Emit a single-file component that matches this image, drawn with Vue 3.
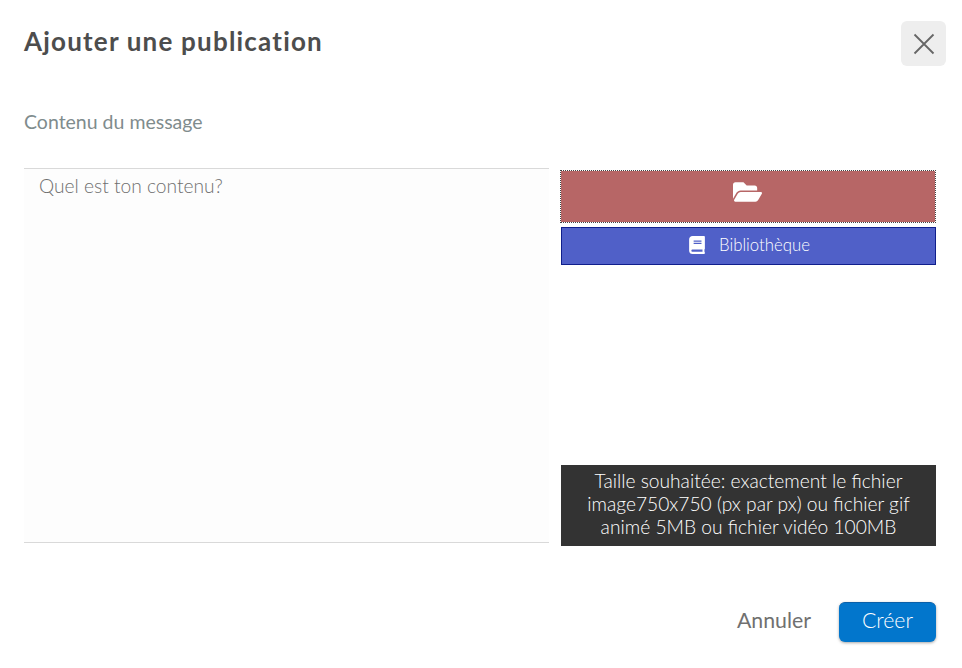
<template>
  <div class="modal">
    <header class="head">
      <h1 class="title">Ajouter une publication</h1>
      <button class="close" type="button" aria-label="Fermer">
        <svg width="22" height="22" viewBox="0 0 22 22">
          <path d="M1.5 1.5 L20.5 20.5 M20.5 1.5 L1.5 20.5" stroke="#666" stroke-width="1.8" fill="none" />
        </svg>
      </button>
    </header>

    <p class="label">Contenu du message</p>

    <div class="body">
      <textarea class="content" placeholder="Quel est ton contenu?"></textarea>
      <div class="side">
        <div class="upload">
          <svg width="29" height="26" viewBox="0 0 576 512">
            <path fill="#fff" d="M572.694 292.093L500.27 416.248A63.997 63.997 0 0 1 444.989 448H45.025c-18.523 0-30.064-20.093-20.731-36.093l72.424-124.155A64 64 0 0 1 152 256h399.964c18.523 0 30.064 20.093 20.73 36.093zM152 224h328v-48c0-26.51-21.49-48-48-48H272l-64-64H48C21.49 64 0 85.49 0 112v278.046l69.077-118.418C86.214 242.25 117.989 224 152 224z" />
          </svg>
        </div>
        <button class="library" type="button">
          <svg width="16" height="18" viewBox="0 0 448 512">
            <path fill="#fff" d="M448 360V24c0-13.3-10.7-24-24-24H96C43 0 0 43 0 96v320c0 53 43 96 96 96h328c13.3 0 24-10.7 24-24v-16c0-7.5-3.5-14.3-8.9-18.7-4.2-15.4-4.2-59.3 0-74.7 5.4-4.3 8.9-11.1 8.9-18.6zM128 134c0-3.3 2.7-6 6-6h212c3.3 0 6 2.7 6 6v20c0 3.3-2.7 6-6 6H134c-3.3 0-6-2.7-6-6v-20zm0 64c0-3.3 2.7-6 6-6h212c3.3 0 6 2.7 6 6v20c0 3.3-2.7 6-6 6H134c-3.3 0-6-2.7-6-6v-20zm253.4 250H96c-17.7 0-32-14.3-32-32 0-17.6 14.4-32 32-32h285.4c-1.9 17.1-1.9 46.9 0 64z" />
          </svg>
          <span>Bibliothèque</span>
        </button>
        <div class="hint">
          Taille souhaitée: exactement le fichier image750x750 (px par px) ou fichier gif animé 5MB ou fichier vidéo 100MB
        </div>
      </div>
    </div>

    <footer class="foot">
      <button class="cancel" type="button">Annuler</button>
      <button class="create" type="button">Créer</button>
    </footer>
  </div>
</template>

<script setup>
</script>

<style>
html, body {
  background: #fff;
}
</style>

<style scoped>
.modal {
  width: 962px;
  height: 668px;
  box-sizing: border-box;
  padding: 21px 16px 0 24px;
  font-family: Lato, "Liberation Sans", sans-serif;
  overflow: hidden;
}

.head {
  display: flex;
  justify-content: space-between;
  align-items: flex-start;
  height: 45px;
}

.title {
  margin: 0;
  font-size: 26px;
  line-height: 40px;
  font-weight: 700;
  letter-spacing: 1.2px;
  color: #4d4d4d;
}

.close {
  width: 45px;
  height: 45px;
  display: flex;
  align-items: center;
  justify-content: center;
  padding: 0;
  border: 0;
  border-radius: 6px;
  background: #eee;
}

.label {
  margin: 44px 0 0;
  font-size: 19.5px;
  line-height: 24px;
  color: #7f8c8d;
}

.body {
  display: flex;
  gap: 12px;
  margin-top: 34px;
  padding-right: 10px;
}

.content {
  display: block;
  width: 525px;
  height: 375px;
  box-sizing: border-box;
  padding: 5px 15px;
  border: 0;
  border-top: 1px solid #d9d9d9;
  border-bottom: 1px solid #d9d9d9;
  border-radius: 0;
  outline: 0;
  resize: none;
  background: #fdfdfd;
  font-family: inherit;
  font-size: 19.2px;
  line-height: 24px;
  font-weight: 300;
}

.content::placeholder {
  color: #6f6f6f;
  opacity: 1;
}

.side {
  flex: 1;
  display: flex;
  flex-direction: column;
  padding-top: 2px;
  height: 378px;
  box-sizing: border-box;
}

.upload {
  height: 53px;
  margin-left: -1px;
  box-sizing: border-box;
  display: flex;
  align-items: center;
  justify-content: center;
  padding: 0 2px 9px 0;
  border: 1px dotted #444;
  background: #b76666;
  background-clip: padding-box;
}

.library {
  height: 38px;
  margin-top: 4px;
  display: flex;
  align-items: center;
  justify-content: center;
  gap: 14px;
  padding: 0 0 3px 2px;
  border: 1px solid #101f8c;
  background: #5060c8;
  color: #fff;
  font-family: inherit;
  font-size: 16.8px;
  font-weight: 300;
}

.hint {
  margin-top: auto;
  padding: 4px 14px 8px;
  background: #333;
  color: #fff;
  font-size: 19.2px;
  font-weight: 300;
  line-height: 23px;
  text-align: center;
}

.foot {
  display: flex;
  justify-content: flex-end;
  align-items: center;
  gap: 28px;
  margin-top: 56px;
  padding-right: 10px;
}

.cancel {
  padding: 0 0 5px;
  border: 0;
  background: none;
  color: #707070;
  font-family: inherit;
  font-size: 21.3px;
}

.create {
  width: 97px;
  height: 40px;
  padding: 0 0 6px;
  border: 0;
  border-top: 1px solid #0a5fa8;
  border-radius: 6px;
  background: #0276cc;
  box-shadow: 0 1px 3px rgba(0, 0, 0, 0.35);
  color: #fff;
  font-family: inherit;
  font-size: 21.3px;
  font-weight: 300;
}
</style>
